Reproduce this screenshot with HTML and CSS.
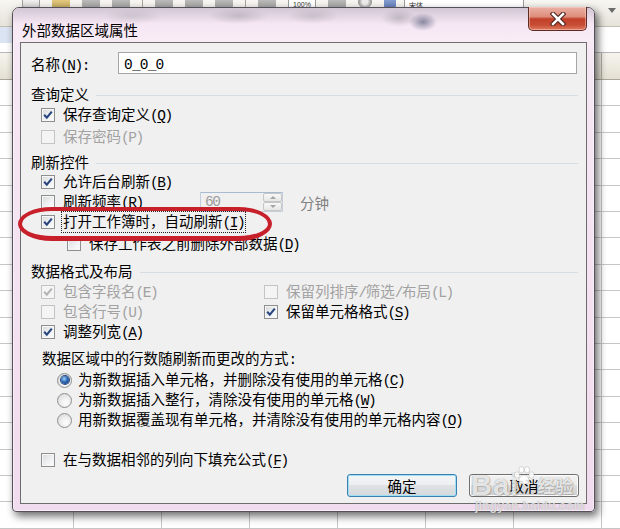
FILE: index.html
```html
<!DOCTYPE html>
<html lang="zh-CN">
<head>
<meta charset="utf-8">
<title>外部数据区域属性</title>
<link rel="stylesheet" href="styles.css">
</head>
<body>
<div class="screen">
  <div class="excel">
    <div class="toolbar">
      <span class="tb-icon tb-doc"></span>
      <span class="tb-icon tb-y"></span>
      <span class="tb-icon"></span>
      <span class="tb-icon"></span>
      <span class="tb-sep"></span>
      <span class="tb-icon"></span>
      <span class="tb-icon"></span>
      <span class="tb-icon"></span>
      <span class="tb-sep"></span>
      <span class="tb-icon"></span>
      <span class="tb-zoom">100%</span>
      <span class="tb-icon"></span>
      <span class="tb-icon tb-round"></span>
      <span class="tb-icon tb-blue"></span>
      <span class="tb-font">宋体</span>
      <span class="tb-drop"></span>
    </div>
    <div class="formula-bar"><span class="name-box"></span></div>
    <div class="col-header"></div>
    <div class="sheet"></div>
  </div>

  <div class="dialog">
    <div class="titlebar">
      <span class="title">外部数据区域属性</span>
      <span class="close">
        <svg width="16" height="14" viewBox="0 0 16 14">
          <path d="M3 2 L13 12 M13 2 L3 12" stroke="#4a1f19" stroke-width="4.6" stroke-linecap="square"/>
          <path d="M3 2 L13 12 M13 2 L3 12" stroke="#ffffff" stroke-width="2.6" stroke-linecap="square"/>
        </svg>
      </span>
    </div>
    <div class="client">
      <div class="name-row">
        <span class="name-label">名称<span class="a">(<u>N</u>):</span></span>
        <span class="name-input"><span class="a">0_0_0</span></span>
      </div>

      <div class="group-head g1">查询定义</div>
      <div class="row mt2">
        <span class="cb"><svg viewBox="0 0 12 12" width="12" height="12"><path d="M2.2 5.8 L4.8 8.6 L9.8 2.6" fill="none" stroke="#28457e" stroke-width="2.1"/></svg></span>
        <span class="t">保存查询定义<span class="a">(<u>Q</u>)</span></span>
      </div>
      <div class="row mt2 disabled">
        <span class="cb"></span>
        <span class="t">保存密码<span class="a">(P)</span></span>
      </div>

      <div class="group-head g2">刷新控件</div>
      <div class="row mt1">
        <span class="cb"><svg viewBox="0 0 12 12" width="12" height="12"><path d="M2.2 5.8 L4.8 8.6 L9.8 2.6" fill="none" stroke="#28457e" stroke-width="2.1"/></svg></span>
        <span class="t">允许后台刷新<span class="a">(<u>B</u>)</span></span>
      </div>
      <div class="row">
        <span class="cb"></span>
        <span class="t freq-label">刷新频率<span class="a">(<u>R</u>)</span></span>
        <span class="spin">
          <span class="spin-val"><span class="a">60</span></span>
          <span class="spin-btns"><span class="sb up"></span><span class="sb down"></span></span>
        </span>
        <span class="t unit">分钟</span>
      </div>
      <div class="row">
        <span class="cb"><svg viewBox="0 0 12 12" width="12" height="12"><path d="M2.2 5.8 L4.8 8.6 L9.8 2.6" fill="none" stroke="#28457e" stroke-width="2.1"/></svg></span>
        <span class="t focus">打开工作簿时，自动刷新<span class="a">(<u>I</u>)</span></span>
      </div>
      <div class="row mt2 indent">
        <span class="cb"></span>
        <span class="t">保存工作表之前删除外部数据<span class="a">(<u>D</u>)</span></span>
      </div>

      <div class="group-head g3">数据格式及布局</div>
      <div class="two-col">
        <div class="row disabled">
          <span class="cb"><svg viewBox="0 0 12 12" width="12" height="12"><path d="M2.2 5.8 L4.8 8.6 L9.8 2.6" fill="none" stroke="#b4b4b4" stroke-width="2.1"/></svg></span>
          <span class="t">包含字段名<span class="a">(E)</span></span>
        </div>
        <div class="row disabled">
          <span class="cb"></span>
          <span class="t">保留列排序<span class="a">/</span>筛选<span class="a">/</span>布局<span class="a">(L)</span></span>
        </div>
        <div class="row disabled">
          <span class="cb"></span>
          <span class="t">包含行号<span class="a">(U)</span></span>
        </div>
        <div class="row">
          <span class="cb"><svg viewBox="0 0 12 12" width="12" height="12"><path d="M2.2 5.8 L4.8 8.6 L9.8 2.6" fill="none" stroke="#28457e" stroke-width="2.1"/></svg></span>
          <span class="t">保留单元格格式<span class="a">(<u>S</u>)</span></span>
        </div>
        <div class="row">
          <span class="cb"><svg viewBox="0 0 12 12" width="12" height="12"><path d="M2.2 5.8 L4.8 8.6 L9.8 2.6" fill="none" stroke="#28457e" stroke-width="2.1"/></svg></span>
          <span class="t">调整列宽<span class="a">(<u>A</u>)</span></span>
        </div>
      </div>

      <div class="plain">数据区域中的行数随刷新而更改的方式<span class="a">:</span></div>
      <div class="row radio mt2">
        <span class="rb on"></span>
        <span class="t">为新数据插入单元格，并删除没有使用的单元格<span class="a">(<u>C</u>)</span></span>
      </div>
      <div class="row radio">
        <span class="rb"></span>
        <span class="t">为新数据插入整行，清除没有使用的单元格<span class="a">(<u>W</u>)</span></span>
      </div>
      <div class="row radio">
        <span class="rb"></span>
        <span class="t">用新数据覆盖现有单元格，并清除没有使用的单元格内容<span class="a">(<u>O</u>)</span></span>
      </div>

      <div class="row fill">
        <span class="cb"></span>
        <span class="t">在与数据相邻的列向下填充公式<span class="a">(<u>F</u>)</span></span>
      </div>

      <div class="buttons">
        <span class="btn btn-default">确定</span>
        <span class="btn">取消</span>
      </div>
    </div>
  </div>

  <div class="annotation"></div>

  <div class="watermark">
    <div class="wm-logo">
      <span class="wm-bai">Bai</span>
      <svg class="wm-paw" width="22" height="20" viewBox="0 0 22 20">
        <g fill="rgba(255,255,255,0.85)" stroke="rgba(120,120,120,0.35)" stroke-width="0.8">
          <ellipse cx="4" cy="9" rx="2.6" ry="3.2"/>
          <ellipse cx="8.5" cy="3.8" rx="2.6" ry="3.2"/>
          <ellipse cx="14" cy="3.8" rx="2.6" ry="3.2"/>
          <ellipse cx="18.5" cy="9" rx="2.6" ry="3.2"/>
          <path d="M11 9 C7 9 5 14 6.5 16.5 C8 18.5 14 18.5 15.5 16.5 C17 14 15 9 11 9 Z"/>
        </g>
      </svg>
      <span class="wm-jy">经验</span>
    </div>
    <div class="wm-url">jingyan.baidu.com</div>
  </div>
</div>
</body>
</html>
```

FILE: styles.css
```css
* { box-sizing: border-box; }

html, body {
  margin: 0;
  padding: 0;
}

body {
  width: 620px;
  height: 529px;
  overflow: hidden;
  font-family: "Noto Sans CJK SC", "Noto Sans", sans-serif;
  font-size: 14.5px;
  color: #111;
}

.screen {
  position: relative;
  width: 620px;
  height: 529px;
  overflow: hidden;
  background: #fff;
}

/* half-width latin, like the dialog's song-style font */
.a {
  font-family: "Liberation Mono", "DejaVu Sans Mono", monospace;
  letter-spacing: -1.45px;
}

/* ---------- Excel background ---------- */
.excel {
  display: flex;
  flex-direction: column;
  height: 100%;
}

.toolbar {
  height: 27px;
  flex: none;
  display: flex;
  align-items: flex-start;
  gap: 12px;
  padding-left: 22px;
  background: linear-gradient(#f7f6f2, #e6e3da);
  border-bottom: 1px solid #c2beb2;
  overflow: hidden;
}

.tb-icon {
  width: 18px;
  height: 12px;
  margin-top: -4px;
  border-radius: 2px;
  background: linear-gradient(#b9b9b9, #8e8e8e);
  opacity: 0.8;
}

.tb-doc { background: linear-gradient(#ffffff, #cfcfcf); border: 1px solid #8a8a8a; }
.tb-y { background: linear-gradient(#f2d47a, #b8953a); }
.tb-round { border-radius: 50%; width: 14px; background: radial-gradient(circle, #e8e8e8 30%, #7c7c7c 70%); }
.tb-blue { width: 12px; background: linear-gradient(#7d9bd6, #3e5fa8); }

.tb-sep {
  width: 1px;
  height: 14px;
  margin-top: -4px;
  background: #a8a59c;
}

.tb-zoom, .tb-font {
  font-family: "Liberation Sans", "Noto Sans CJK SC", sans-serif;
  font-size: 7px;
  line-height: 10px;
  height: 10px;
  margin-top: 0;
  color: #3a3a3a;
  background: #fff;
  border: 1px solid #9c9c9c;
  border-top: none;
  padding: 0 4px;
}

.tb-font {
  font-family: "Noto Sans CJK SC", sans-serif;
  width: 120px;
  margin-left: -4px;
}

.tb-drop {
  margin-left: auto;
  margin-right: 4px;
  margin-top: 8px;
  border-left: 4px solid transparent;
  border-right: 4px solid transparent;
  border-top: 5px solid #6c6c6c;
}

.formula-bar {
  height: 26px;
  flex: none;
  background: #fff;
  border-bottom: 1px solid #b9b9b9;
}

.name-box {
  display: block;
  width: 60px;
  height: 16px;
  background: #dbe4f2;
}

.col-header {
  height: 27px;
  flex: none;
  background:
    repeating-linear-gradient(to right, transparent 0 87px, #b3afa3 87px 88px),
    linear-gradient(#f6f4ee, #e4e0d3);
  background-position: -14px 0, 0 0;
  border-bottom: 1px solid #a9a598;
}

.sheet {
  flex: 1;
  background:
    repeating-linear-gradient(to bottom, transparent 0 25.4px, #c6c6c6 25.4px 26.4px),
    repeating-linear-gradient(to right, transparent 0 87px, #c6c6c6 87px 88px),
    #ffffff;
  background-position: 0 0, -14px 0, 0 0;
}

/* ---------- Dialog window ---------- */
.dialog {
  position: absolute;
  left: 12px;
  top: 7px;
  width: 583px;
  height: 505px;
  display: flex;
  flex-direction: column;
  border: 1px solid #55505a;
  border-radius: 7px 7px 4px 4px;
  background: linear-gradient(#f7e9f5, #f1dbee);
  box-shadow: 3px 4px 9px rgba(0, 0, 0, 0.6), inset 0 0 0 1px rgba(255, 255, 255, 0.55);
}

.titlebar {
  height: 34px;
  flex: none;
  display: flex;
  align-items: flex-start;
  border-radius: 6px 6px 0 0;
  background:
    radial-gradient(ellipse 14px 9px at 410px 14px, rgba(50, 60, 95, 0.55), transparent),
    radial-gradient(ellipse 18px 9px at 386px 10px, rgba(120, 120, 130, 0.35), transparent),
    radial-gradient(ellipse 30px 8px at 225px 8px, rgba(120, 120, 130, 0.3), transparent),
    radial-gradient(ellipse 26px 8px at 300px 8px, rgba(120, 120, 130, 0.25), transparent),
    radial-gradient(ellipse 30px 8px at 120px 8px, rgba(140, 140, 150, 0.25), transparent),
    linear-gradient(rgba(170, 165, 175, 0.45) 0px, rgba(240, 225, 238, 0) 16px),
    linear-gradient(#f4e2f1, #f8ecf6);
}

.title {
  margin: 13px 0 0 9px;
  line-height: 17px;
  color: #000;
}

.close {
  margin-left: auto;
  margin-right: 7px;
  margin-top: -1px;
  width: 59px;
  height: 24px;
  display: flex;
  align-items: center;
  justify-content: center;
  border: 1px solid #5e2b24;
  border-top: none;
  border-radius: 0 0 5px 5px;
  background: linear-gradient(#eab2a6 0%, #de8d7b 42%, #c2402a 52%, #c84d35 78%, #de7d60 100%);
  box-shadow: inset 0 0 0 1px rgba(255, 220, 210, 0.45);
}

.client {
  flex: none;
  height: 462px;
  margin: 0 7px;
  border: 1px solid #6d6d6d;
  background: #f0f0f0;
  padding: 9px 8px 0 10px;
  display: flex;
  flex-direction: column;
  color: #000;
}

u { text-underline-offset: 2px; }

.name-row {
  height: 22px;
  display: flex;
  align-items: center;
}

.name-label {
  width: 87px;
  flex: none;
}

.name-input {
  flex: 1;
  height: 22px;
  margin-right: 1px;
  border: 1px solid #a6a6a6;
  background: #fff;
  padding-left: 5px;
  line-height: 20px;
}

.name-input .a { letter-spacing: -0.8px; }

.group-head {
  height: 20px;
  display: flex;
  align-items: center;
}

.group-head::after {
  content: "";
  flex: 1;
  height: 1px;
  margin: 4px 0 0 7px;
  background: #d6dce4;
}

.g1 { margin-top: 9px; }
.g2 { margin-top: 4px; }
.g3 { margin-top: 6px; }

.row {
  height: 20px;
  display: flex;
  align-items: center;
  padding-left: 10px;
  white-space: nowrap;
}

.t { line-height: 17px; }

.mt1 { margin-top: 1px; }
.mt2 { margin-top: 2px; }

.row.indent { padding-left: 36px; }

.disabled { color: #a2a2a2; }

.cb {
  width: 14px;
  height: 14px;
  flex: none;
  margin-right: 8px;
  display: flex;
  align-items: center;
  justify-content: center;
  border: 1px solid #8e8f8f;
  background: linear-gradient(135deg, #d6d8db 0%, #eef0f1 55%, #ffffff 100%);
  box-shadow: inset 0 0 0 1px #f6f6f6;
}

.disabled .cb {
  border-color: #c4c4c4;
  background: #f4f4f4;
  box-shadow: none;
}

.freq-label { width: 137px; flex: none; }

.spin {
  width: 83px;
  height: 20px;
  flex: none;
  display: flex;
  border: 1px solid #c4cfdb;
  border-top-color: #a9bbd0;
  background: #f0f0f0;
}

.spin-val {
  flex: 1;
  display: flex;
  align-items: center;
  color: #9c9c9c;
  padding-left: 4px;
  line-height: 15px;
}

.spin-btns {
  width: 19px;
  display: flex;
  flex-direction: column;
}

.sb {
  flex: 1;
  display: flex;
  align-items: center;
  justify-content: center;
  border: 1px solid #c6c6c6;
  border-radius: 2px;
  background: linear-gradient(#f8f8f8, #e6e6e6);
}

.sb::after {
  content: "";
  border-left: 3px solid transparent;
  border-right: 3px solid transparent;
}

.sb.up::after { border-bottom: 3px solid #a4a4a4; }
.sb.down::after { border-top: 3px solid #a4a4a4; }

.unit {
  margin-left: 17px;
  color: #808080;
}

.focus {
  outline: 1px dotted #222;
  outline-offset: 0;
  padding: 0 1px;
  margin-left: -1px;
}

.two-col {
  margin-top: 2px;
  display: grid;
  grid-template-columns: 223px 1fr;
}

.plain {
  margin-top: 6px;
  height: 20px;
  line-height: 20px;
  padding-left: 11px;
}

.row.radio { padding-left: 26px; }

.rb {
  width: 15px;
  height: 15px;
  flex: none;
  margin-right: 6px;
  border-radius: 50%;
  border: 1px solid #8e8f8f;
  background: radial-gradient(circle at 60% 65%, #ffffff 0%, #e8e8e8 55%, #d0d0d0 100%);
  display: flex;
  align-items: center;
  justify-content: center;
}

.rb.on::after {
  content: "";
  width: 8px;
  height: 8px;
  border-radius: 50%;
  background: radial-gradient(circle at 40% 35%, #a6d2f6 0%, #2d69b8 45%, #0f2f6c 100%);
  box-shadow: 0 0 0 1px #2f4f80;
}

.row.fill { margin-top: 20px; }

.buttons {
  margin-top: 4px;
  margin-right: -1px;
  display: flex;
  justify-content: flex-end;
  gap: 12px;
}

.btn {
  width: 110px;
  height: 23px;
  display: flex;
  align-items: center;
  justify-content: center;
  border: 1px solid #707070;
  border-radius: 3px;
  background: linear-gradient(#f2f2f2 0%, #ebebeb 50%, #dddddd 50%, #cfcfcf 100%);
  box-shadow: inset 0 0 0 1px #fbfbfb;
  color: #000;
}

.btn-default {
  border-color: #3c7fb1;
  background: linear-gradient(#f3f5f6 0%, #eceeef 50%, #dfe2e4 50%, #d5d9db 100%);
  box-shadow: inset 0 0 0 1px #9fdff6;
}

/* ---------- overlays ---------- */
.annotation {
  position: absolute;
  left: 18px;
  top: 207px;
  width: 254px;
  height: 34px;
  border: 4px solid #c8202b;
  border-bottom-width: 5px;
  border-radius: 34px / 17px;
}

.watermark {
  position: absolute;
  left: 471px;
  top: 460px;
  display: flex;
  flex-direction: column;
  align-items: flex-start;
  pointer-events: none;
}

.wm-logo {
  display: flex;
  align-items: flex-end;
  height: 40px;
}

.wm-bai, .wm-jy {
  font-family: "Liberation Sans", "Noto Sans CJK SC", sans-serif;
  font-weight: bold;
  color: rgba(255, 255, 255, 0.82);
  text-shadow: 0 0 1px rgba(0, 0, 0, 0.45), 1px 1px 1px rgba(0, 0, 0, 0.15);
}

.wm-bai {
  font-size: 29px;
  line-height: 30px;
  letter-spacing: 1px;
}

.wm-paw {
  margin: 0 2px 14px -6px;
}

.wm-jy {
  font-family: "Noto Sans CJK SC", sans-serif;
  font-size: 18px;
  line-height: 24px;
  margin-bottom: 3px;
}

.wm-url {
  margin-top: -1px;
  margin-left: 4px;
  font-family: "Liberation Sans", sans-serif;
  font-weight: bold;
  font-size: 12.5px;
  line-height: 14px;
  color: rgba(235, 235, 235, 0.85);
  text-shadow: 0 0 1px rgba(0, 0, 0, 0.35);
}
```
